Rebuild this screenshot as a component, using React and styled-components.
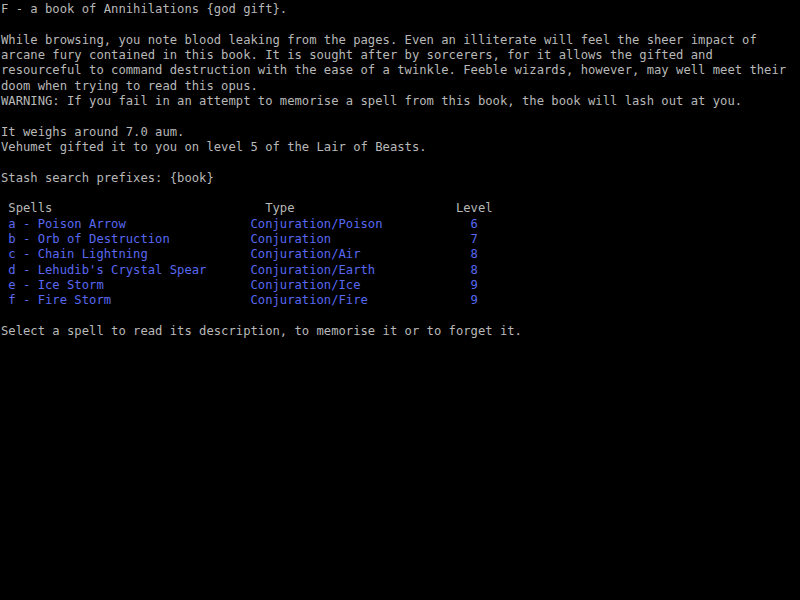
import { Fragment } from 'react'
import styled, { createGlobalStyle } from 'styled-components'

const GlobalStyle = createGlobalStyle`
  html, body {
    margin: 0;
    padding: 0;
    background: #000;
  }
`

const lightGrey = '#b8b8b8'
const lightBlue = '#5868f2'

const Screen = styled.div`
  width: 800px;
  height: 600px;
  box-sizing: border-box;
  padding: 2px 0 0 1px;
  background: #000;
  color: ${lightGrey};
  font-family: 'DejaVu Sans Mono', monospace;
  font-size: 12.2px;
  line-height: 15.33px;
  white-space: pre;
  overflow: hidden;
`

const Line = styled.div`
  min-height: 15.33px;
`

const SpellTable = styled.div`
  display: grid;
  grid-template-columns: 33ch 28ch auto;
  padding-left: 1ch;
`

const Cell = styled.div`
  color: ${(p) => (p.$head ? lightGrey : lightBlue)};
  padding-left: ${(p) => p.$indent || 0}ch;
`

const spells = [
  ['a', 'Poison Arrow', 'Conjuration/Poison', 6],
  ['b', 'Orb of Destruction', 'Conjuration', 7],
  ['c', 'Chain Lightning', 'Conjuration/Air', 8],
  ['d', "Lehudib's Crystal Spear", 'Conjuration/Earth', 8],
  ['e', 'Ice Storm', 'Conjuration/Ice', 9],
  ['f', 'Fire Storm', 'Conjuration/Fire', 9],
]

const description = [
  'While browsing, you note blood leaking from the pages. Even an illiterate will feel the sheer impact of',
  'arcane fury contained in this book. It is sought after by sorcerers, for it allows the gifted and',
  'resourceful to command destruction with the ease of a twinkle. Feeble wizards, however, may well meet their',
  'doom when trying to read this opus.',
  'WARNING: If you fail in an attempt to memorise a spell from this book, the book will lash out at you.',
]

export default function App () {
  return (
    <>
      <GlobalStyle />
      <Screen>
        <Line>F - a book of Annihilations {'{god gift}'}.</Line>
        <Line />
        {description.map((text) => (
          <Line key={text}>{text}</Line>
        ))}
        <Line />
        <Line>It weighs around 7.0 aum.</Line>
        <Line>Vehumet gifted it to you on level 5 of the Lair of Beasts.</Line>
        <Line />
        <Line>Stash search prefixes: {'{book}'}</Line>
        <Line />
        <SpellTable>
          <Cell $head>Spells</Cell>
          <Cell $head $indent={2}>Type</Cell>
          <Cell $head>Level</Cell>
          {spells.map(([key, name, type, level]) => (
            <Fragment key={key}>
              <Cell>{key} - {name}</Cell>
              <Cell>{type}</Cell>
              <Cell $indent={2}>{level}</Cell>
            </Fragment>
          ))}
        </SpellTable>
        <Line />
        <Line>Select a spell to read its description, to memorise it or to forget it.</Line>
      </Screen>
    </>
  )
}
